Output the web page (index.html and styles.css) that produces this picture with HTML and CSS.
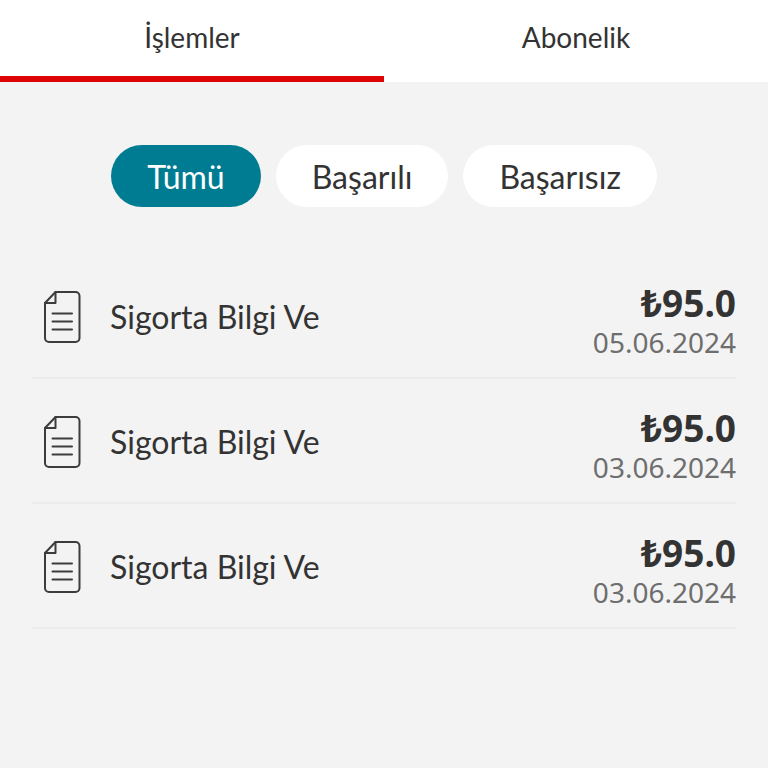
FILE: index.html
```html
<!DOCTYPE html>
<html lang="tr">
<head>
  <meta charset="UTF-8">
  <title>İşlemler</title>
  <meta name="viewport" content="width=device-width, initial-scale=1.0">
  <link rel="stylesheet" href="styles.css">
</head>
<body>

<svg class="sprite" aria-hidden="true">
  <symbol id="doc" viewBox="0 0 38 54">
    <path d="M12.500 2H32.500a4 4 0 0 1 4 4v42a4 4 0 0 1-4 4H6a4 4 0 0 1-4-4V13z" />
    <path d="M12.500 2v11H2" />
    <path d="M9.500 23.500h19.500M9.500 31.500h19.500M9.500 39.500h19.500" />
  </symbol>
</svg>

<nav class="tabs">
  <a class="tab active" href="#islemler">İşlemler</a>
  <a class="tab" href="#abonelik">Abonelik</a>
</nav>

<main>
  <div class="filters">
    <button class="filter selected" type="button">Tümü</button>
    <button class="filter" type="button">Başarılı</button>
    <button class="filter" type="button">Başarısız</button>
  </div>

  <ul class="transactions">
    <li class="transaction">
      <svg class="icon" aria-hidden="true"><use href="#doc" /></svg>
      <span class="title">Sigorta Bilgi Ve</span>
      <div class="details">
        <strong class="amount">₺95.0</strong>
        <span class="date">05.06.2024</span>
      </div>
    </li>
    <li class="transaction">
      <svg class="icon" aria-hidden="true"><use href="#doc" /></svg>
      <span class="title">Sigorta Bilgi Ve</span>
      <div class="details">
        <strong class="amount">₺95.0</strong>
        <span class="date">03.06.2024</span>
      </div>
    </li>
    <li class="transaction">
      <svg class="icon" aria-hidden="true"><use href="#doc" /></svg>
      <span class="title">Sigorta Bilgi Ve</span>
      <div class="details">
        <strong class="amount">₺95.0</strong>
        <span class="date">03.06.2024</span>
      </div>
    </li>
  </ul>
</main>

</body>
</html>
```

FILE: styles.css
```css
* {
  box-sizing: border-box;
  margin: 0;
  padding: 0;
}

body {
  min-height: 100vh;
  background: #f3f3f3;
  color: #333;
  font-family: Lato, "Noto Sans", sans-serif;
}

.sprite {
  display: none;
}

.tabs {
  display: flex;
  background: #fff;
}

.tab {
  flex: 1;
  padding: 18px 0 20px;
  border-bottom: 6px solid transparent;
  color: #333;
  font-size: 28px;
  line-height: 38px;
  text-align: center;
  text-decoration: none;
}

.tab.active {
  border-bottom-color: #dc0404;
}

.filters {
  display: flex;
  justify-content: center;
  gap: 15px;
  padding: 63px 32px 47px;
}

.filter {
  padding: 11px 36px 9px;
  border: none;
  border-radius: 31px;
  background: #fff;
  color: #333;
  font-family: inherit;
  font-size: 32px;
  line-height: 42px;
  cursor: pointer;
}

.filter.selected {
  background: #007c92;
  color: #fff;
}

.transactions {
  padding: 0 32px;
  list-style: none;
}

.transaction {
  display: flex;
  align-items: center;
  padding: 19px 0 16px 11px;
  border-bottom: 2px solid #ebebeb;
}

.icon {
  width: 38px;
  height: 54px;
  margin-right: 29px;
  fill: none;
  stroke: #3c3c3c;
  stroke-width: 2;
  stroke-linecap: round;
  stroke-linejoin: round;
}

.title {
  flex: 1;
  font-size: 32px;
  line-height: 40px;
}

.details {
  display: flex;
  flex-direction: column;
  align-items: flex-end;
  padding-top: 10px;
  font-family: "Noto Sans", sans-serif;
}

.amount {
  font-size: 37px;
  line-height: 40px;
}

.date {
  color: #6e6e6e;
  font-size: 28px;
  line-height: 38px;
}
```
